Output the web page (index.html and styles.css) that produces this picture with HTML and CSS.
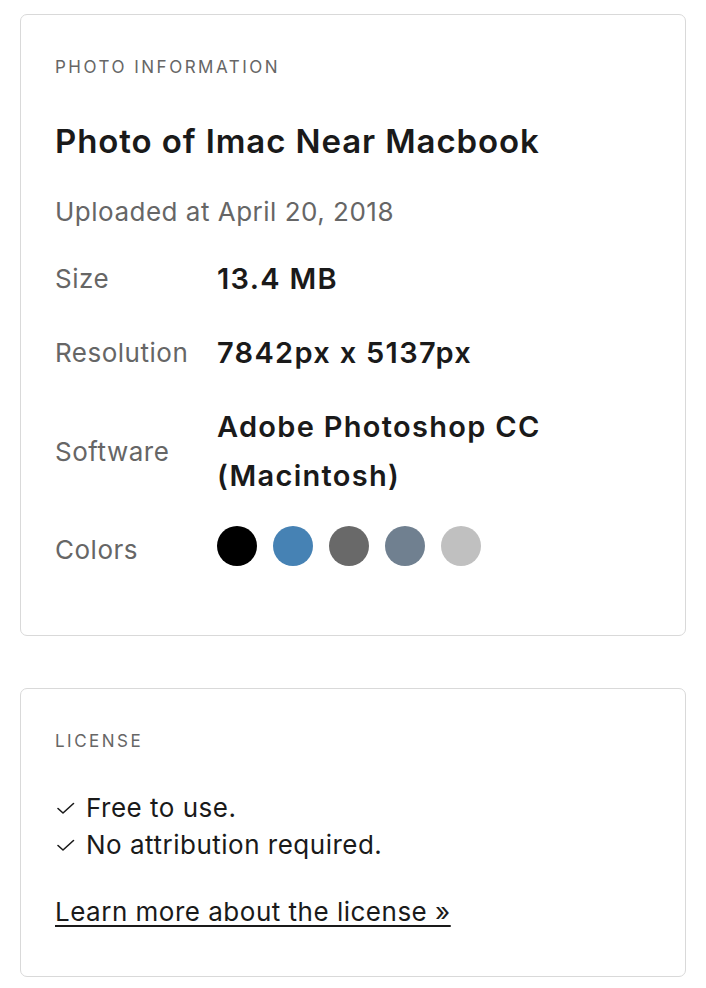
FILE: index.html
```html
<!DOCTYPE html>
<html lang="en">
<head>
<meta charset="utf-8">
<title>Photo information</title>
<link rel="stylesheet" href="styles.css">
</head>
<body>
<main class="page">
  <section class="card info">
    <h2 class="eyebrow">PHOTO INFORMATION</h2>
    <h1 class="title">Photo of Imac Near Macbook</h1>
    <p class="uploaded">Uploaded at April 20, 2018</p>
    <dl class="details">
      <dt>Size</dt>
      <dd>13.4 MB</dd>
      <dt>Resolution</dt>
      <dd>7842px x 5137px</dd>
      <dt>Software</dt>
      <dd>Adobe Photoshop CC<br>(Macintosh)</dd>
      <dt>Colors</dt>
      <dd class="swatches">
        <span class="swatch" style="background:#000000"></span>
        <span class="swatch" style="background:#4682b4"></span>
        <span class="swatch" style="background:#696969"></span>
        <span class="swatch" style="background:#708090"></span>
        <span class="swatch" style="background:#c0c0c0"></span>
      </dd>
    </dl>
  </section>

  <section class="card license">
    <h2 class="eyebrow">LICENSE</h2>
    <ul class="checks">
      <li><svg class="check" width="20" height="14" viewBox="0 0 20 14"><path d="M2 7.5 L7 12 L17.5 2.5" fill="none" stroke="#1a1a1a" stroke-width="1.6" stroke-linecap="round" stroke-linejoin="round"/></svg>Free to use.</li>
      <li><svg class="check" width="20" height="14" viewBox="0 0 20 14"><path d="M2 7.5 L7 12 L17.5 2.5" fill="none" stroke="#1a1a1a" stroke-width="1.6" stroke-linecap="round" stroke-linejoin="round"/></svg>No attribution required.</li>
    </ul>
    <a class="more" href="#">Learn more about the license&nbsp;»</a>
  </section>
</main>
</body>
</html>
```

FILE: styles.css
```css
* { box-sizing: border-box; }
html, body { margin: 0; padding: 0; background: #fff; }
body {
  font-family: Inter, "Noto Sans", "Liberation Sans", sans-serif;
  color: #1a1a1a;
}
.page {
  padding: 14px 20px 10px 20px;
  display: flex;
  flex-direction: column;
  gap: 52px;
}
.card {
  border: 1px solid #d9d9d9;
  border-radius: 7px;
  padding: 42px 34px 0 34px;
}
.info { padding-bottom: 61px; }
.license { padding-bottom: 46px; }
.eyebrow {
  margin: 0;
  font-size: 17px;
  font-weight: 400;
  line-height: 20px;
  letter-spacing: 2.5px;
  color: #666;
}
.title {
  margin: 44px 0 0 0;
  font-size: 33px;
  font-weight: 600;
  line-height: 40px;
  color: #1a1a1a;
  letter-spacing: 0.9px;
}
.uploaded {
  margin: 35px 0 0 0;
  font-size: 26px;
  line-height: 32px;
  letter-spacing: 0.5px;
  color: #666;
}
.details {
  margin: 26px 0 0 0;
  display: grid;
  grid-template-columns: 162px 1fr;
  row-gap: 25px;
}
.details dt {
  font-size: 26px;
  line-height: 49px;
  letter-spacing: 0.5px;
  color: #666;
  align-self: center;
}
.details dd {
  margin: 0;
  font-size: 29px;
  font-weight: 600;
  line-height: 49px;
  letter-spacing: 1.3px;
  color: #1a1a1a;
}
.swatches {
  display: flex;
  gap: 16px;
  align-self: start;
  padding-top: 1px;
  height: 49px;
}
.swatch {
  width: 40px;
  height: 40px;
  border-radius: 50%;
  flex: none;
}
.checks {
  list-style: none;
  margin: 38px 0 0 0;
  padding: 0;
}
.checks li {
  font-size: 26px;
  line-height: 37px;
  letter-spacing: 0.5px;
  display: flex;
  align-items: center;
  color: #1a1a1a;
}
.check {
  margin: 0 10px 0 1px;
  flex: none;
}
.more {
  display: inline-block;
  margin-top: 30px;
  font-size: 26px;
  line-height: 37px;
  letter-spacing: 0.5px;
  color: #1a1a1a;
  text-decoration: underline;
  text-underline-offset: 4px;
  text-decoration-thickness: 1.5px;
}
```
